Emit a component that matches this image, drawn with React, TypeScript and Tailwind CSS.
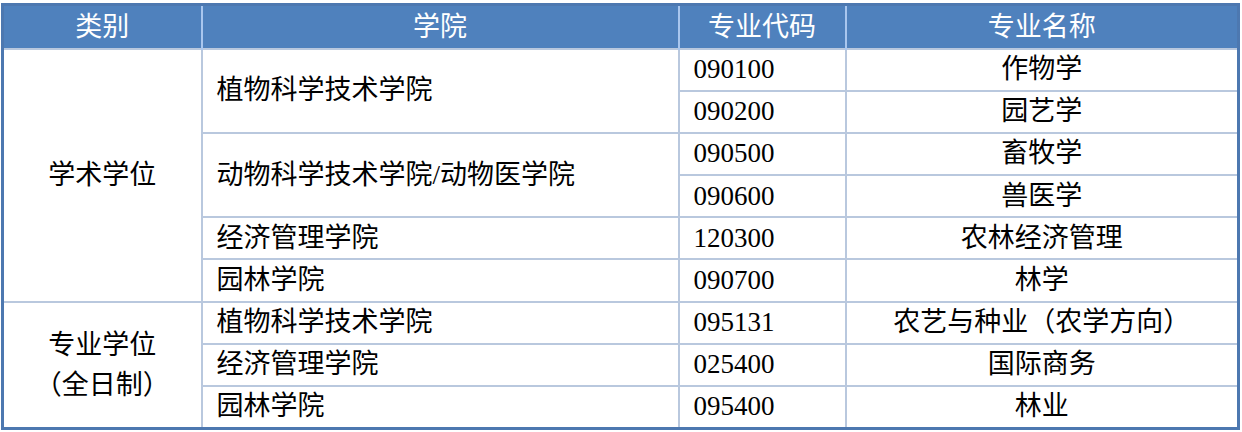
const font = {
  fontFamily: '"Liberation Serif", "Noto Sans CJK SC", serif',
};

function Cell({
  children,
  className = "",
  rowSpan,
}: {
  children?: React.ReactNode;
  className?: string;
  rowSpan?: number;
}) {
  return (
    <td
      rowSpan={rowSpan}
      className={`border-2 border-[#b9c8de] p-0 text-[27px] leading-none text-black ${className}`}
    >
      {children}
    </td>
  );
}

export default function App() {
  return (
    <div className="w-[1242px] h-[432px] bg-white pt-[3px] pl-[1px]" style={font}>
      <table className="table-fixed border-collapse w-[1239px] border-[3px] border-[#4d78b0]">
        <colgroup>
          <col className="w-[199px]" />
          <col className="w-[477px]" />
          <col className="w-[167px]" />
          <col />
        </colgroup>
        <thead>
          <tr className="bg-[#4f81bd] text-white h-[44px] text-[27px]">
            <th className="font-normal border-r-2 border-[#a9c6ee]">类别</th>
            <th className="font-normal border-r-2 border-[#a9c6ee]">学院</th>
            <th className="font-normal border-r-2 border-[#a9c6ee]">专业代码</th>
            <th className="font-normal">专业名称</th>
          </tr>
        </thead>
        <tbody>
          <tr className="h-[42.2px]">
            <Cell rowSpan={6} className="text-center">学术学位</Cell>
            <Cell rowSpan={2} className="pl-[14px]">植物科学技术学院</Cell>
            <Cell className="pl-[14px]">090100</Cell>
            <Cell className="text-center">作物学</Cell>
          </tr>
          <tr className="h-[42.2px]">
            <Cell className="pl-[14px]">090200</Cell>
            <Cell className="text-center">园艺学</Cell>
          </tr>
          <tr className="h-[42.2px]">
            <Cell rowSpan={2} className="pl-[14px]">动物科学技术学院/动物医学院</Cell>
            <Cell className="pl-[14px]">090500</Cell>
            <Cell className="text-center">畜牧学</Cell>
          </tr>
          <tr className="h-[42.2px]">
            <Cell className="pl-[14px]">090600</Cell>
            <Cell className="text-center">兽医学</Cell>
          </tr>
          <tr className="h-[42.2px]">
            <Cell className="pl-[14px]">经济管理学院</Cell>
            <Cell className="pl-[14px]">120300</Cell>
            <Cell className="text-center">农林经济管理</Cell>
          </tr>
          <tr className="h-[42.2px]">
            <Cell className="pl-[14px]">园林学院</Cell>
            <Cell className="pl-[14px]">090700</Cell>
            <Cell className="text-center">林学</Cell>
          </tr>
          <tr className="h-[42.2px]">
            <Cell rowSpan={3} className="text-center">
              <div className="leading-[40px]">
                专业学位
                <br />
                （全日制）
              </div>
            </Cell>
            <Cell className="pl-[14px]">植物科学技术学院</Cell>
            <Cell className="pl-[14px]">095131</Cell>
            <Cell className="text-center">农艺与种业（农学方向）</Cell>
          </tr>
          <tr className="h-[42.2px]">
            <Cell className="pl-[14px]">经济管理学院</Cell>
            <Cell className="pl-[14px]">025400</Cell>
            <Cell className="text-center">国际商务</Cell>
          </tr>
          <tr className="h-[42.2px]">
            <Cell className="pl-[14px]">园林学院</Cell>
            <Cell className="pl-[14px]">095400</Cell>
            <Cell className="text-center">林业</Cell>
          </tr>
        </tbody>
      </table>
    </div>
  );
}
